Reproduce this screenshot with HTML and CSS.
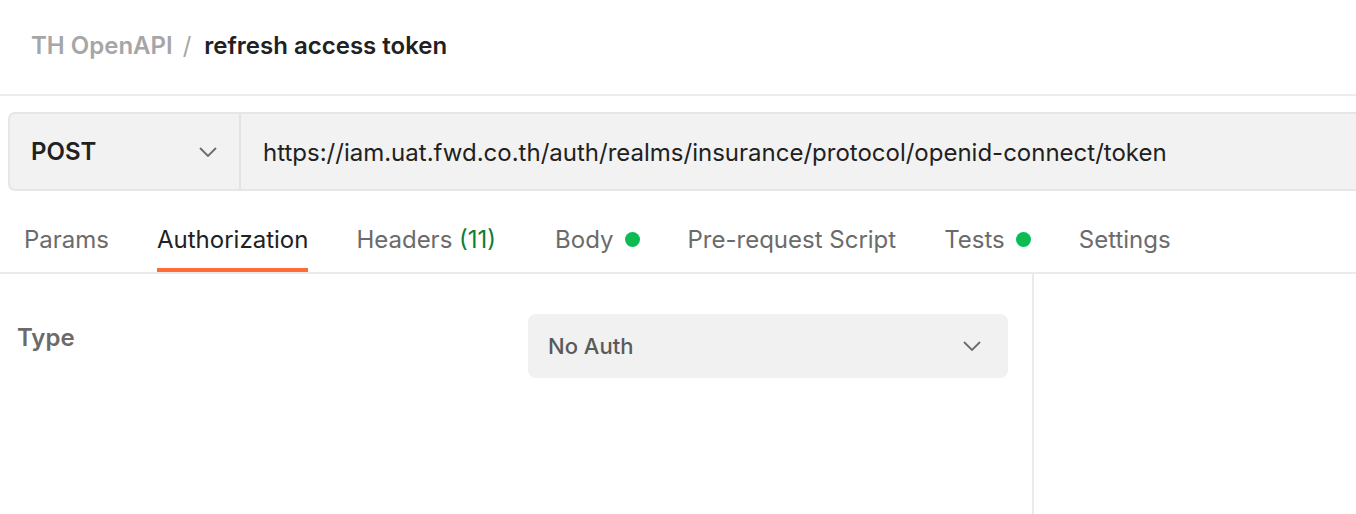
FILE: index.html
```html
<!DOCTYPE html>
<html>
<head>
<meta charset="utf-8">
<link rel="stylesheet" href="styles.css">
</head>
<body>
<div class="page">
  <header class="crumbs">
    <span class="crumb-parent">TH OpenAPI</span>
    <span class="crumb-sep">/</span>
    <span class="crumb-current">refresh access token</span>
  </header>
  <div class="request">
    <div class="urlbar">
      <div class="method">
        <span class="method-name">POST</span>
        <svg class="chev" width="18" height="10" viewBox="0 0 18 10"><path d="M1 1 L9 9 L17 1" fill="none" stroke="#6b6b6b" stroke-width="1.8"/></svg>
      </div>
      <div class="url">https://iam.uat.fwd.co.th/auth/realms/insurance/protocol/openid-connect/token</div>
    </div>
  </div>
  <nav class="tabs">
    <div class="tab">Params</div>
    <div class="tab active">Authorization</div>
    <div class="tab tab-headers">Headers <span class="count">(11)</span></div>
    <div class="tab">Body<span class="dot"></span></div>
    <div class="tab">Pre-request Script</div>
    <div class="tab">Tests<span class="dot"></span></div>
    <div class="tab">Settings</div>
  </nav>
  <div class="content">
    <div class="auth-pane">
      <div class="type-label">Type</div>
      <div class="select">
        <span>No Auth</span>
        <svg class="chev" width="18" height="10" viewBox="0 0 18 10"><path d="M1 1 L9 9 L17 1" fill="none" stroke="#6b6b6b" stroke-width="1.8"/></svg>
      </div>
    </div>
    <div class="side-pane"></div>
  </div>
</div>
</body>
</html>
```
FILE: styles.css
```css
* { box-sizing: border-box; }
html, body { margin: 0; padding: 0; background: #fff; }
body {
  font-family: Inter, "Noto Sans", sans-serif;
  color: #212121;
  width: 1356px;
  height: 514px;
  overflow: hidden;
}
.page { display: flex; flex-direction: column; height: 514px; }
.crumbs {
  height: 96px;
  display: flex;
  align-items: center;
  padding-left: 31px;
  padding-bottom: 4px;
  font-size: 24px;
  font-weight: 600;
  border-bottom: 2px solid #ededed;
}
.crumb-parent { color: #a6a6a6; }
.crumb-sep { color: #a6a6a6; font-weight: 400; margin: 0 13px 0 10px; }
.crumb-current { color: #212121; }
.request { padding: 16px 0 0 8px; }
.urlbar {
  display: flex;
  height: 79px;
  background: #f2f2f2;
  border: 2px solid #e6e6e6;
  border-right: none;
  border-radius: 7px 0 0 7px;
}
.method {
  width: 231px;
  display: flex;
  align-items: center;
  justify-content: space-between;
  padding: 0 22px 0 21px;
  border-right: 2px solid #e3e3e3;
  font-size: 24px;
  font-weight: 600;
  color: #212121;
}
.url {
  display: flex;
  align-items: center;
  padding-left: 22px;
  padding-top: 2px;
  font-size: 24px;
  color: #212121;
}
.tabs {
  display: flex;
  gap: 48px;
  padding-left: 24px;
  height: 83px;
  border-bottom: 2px solid #ebebeb;
}
.tab {
  display: flex;
  align-items: center;
  padding-top: 19px;
  font-size: 24px;
  color: #6b6b6b;
  border-bottom: 4px solid transparent;
  white-space: pre;
}
.tab.active { color: #212121; border-bottom-color: #ff6c37; }
.tab-headers { margin-right: 11px; }
.count { color: #0f7d34; }
.dot {
  display: inline-block;
  width: 15px;
  height: 15px;
  border-radius: 50%;
  background: #0cbb52;
  margin-left: 11px;
}
.content { flex: 1; display: flex; }
.auth-pane {
  width: 1034px;
  display: flex;
  justify-content: space-between;
  align-items: flex-start;
  padding: 40px 24px 0 17px;
  border-right: 2px solid #ebebeb;
}
.type-label {
  font-size: 24px;
  font-weight: 600;
  color: #6b6b6b;
  padding-top: 9px;
}
.select {
  width: 480px;
  height: 64px;
  background: #f1f1f1;
  border-radius: 8px;
  display: flex;
  align-items: center;
  justify-content: space-between;
  padding: 0 27px 0 20px;
  font-size: 22px;
  font-weight: 500;
  color: #5a5a5a;
}
.side-pane { flex: 1; }
```
